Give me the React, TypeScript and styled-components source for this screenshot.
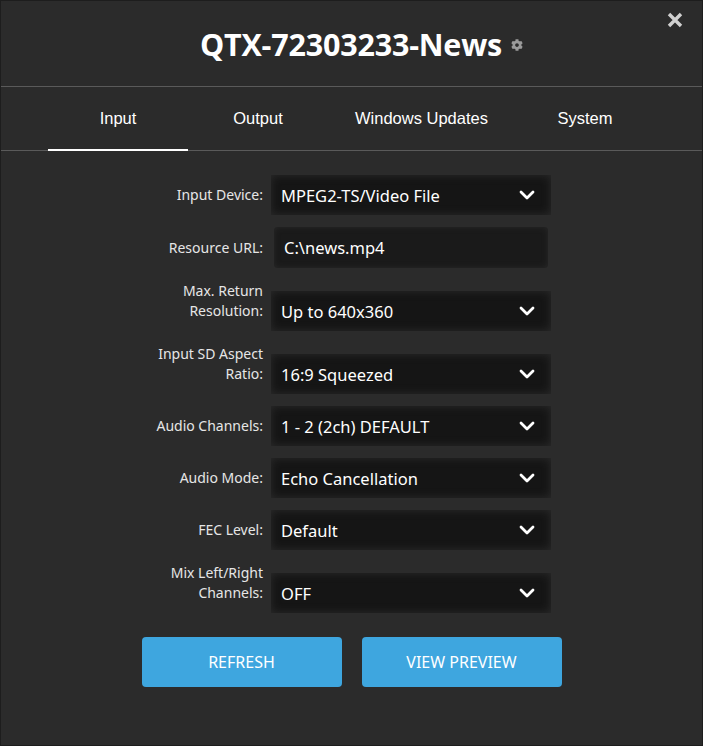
import React, { useState } from "react";
import styled, { createGlobalStyle } from "styled-components";
import { FaCog } from "react-icons/fa";

const GlobalStyle = createGlobalStyle`
  html, body {
    margin: 0;
    padding: 0;
    background: #1c1c1c;
  }
  * {
    box-sizing: border-box;
  }
`;

type Field = {
  label: string[];
  value: string;
  kind: "select" | "input";
};

const fields: Field[] = [
  { label: ["Input Device:"], value: "MPEG2-TS/Video File", kind: "select" },
  { label: ["Resource URL:"], value: "C:\\news.mp4", kind: "input" },
  { label: ["Max. Return", "Resolution:"], value: "Up to 640x360", kind: "select" },
  { label: ["Input SD Aspect", "Ratio:"], value: "16:9 Squeezed", kind: "select" },
  { label: ["Audio Channels:"], value: "1 - 2 (2ch) DEFAULT", kind: "select" },
  { label: ["Audio Mode:"], value: "Echo Cancellation", kind: "select" },
  { label: ["FEC Level:"], value: "Default", kind: "select" },
  { label: ["Mix Left/Right", "Channels:"], value: "OFF", kind: "select" },
];

const tabs = ["Input", "Output", "Windows Updates", "System"];

const Chevron = () => (
  <svg width="16" height="10" viewBox="0 0 16 10">
    <polyline
      points="2,2 8,8 14,2"
      fill="none"
      stroke="#fff"
      strokeWidth="2.8"
      strokeLinecap="round"
      strokeLinejoin="round"
    />
  </svg>
);

export default function App() {
  const [active, setActive] = useState(0);

  return (
    <>
      <GlobalStyle />
      <Modal>
        <Header>
          <Title>QTX-72303233-News</Title>
          <Gear>
            <FaCog size={12} />
          </Gear>
          <Close aria-label="close">
            <svg width="16" height="16" viewBox="0 0 16 16">
              <path
                d="M2 2 L14 14 M14 2 L2 14"
                stroke="#d0d0d0"
                strokeWidth="3.4"
                strokeLinecap="butt"
              />
            </svg>
          </Close>
        </Header>

        <Tabs>
          {tabs.map((t, i) => (
            <Tab key={t} $active={i === active} onClick={() => setActive(i)}>
              {t}
            </Tab>
          ))}
        </Tabs>

        <Form>
          {fields.map((f) => (
            <Row key={f.label.join(" ")} $tall={f.label.length > 1}>
              <Label>
                {f.label.map((l) => (
                  <span key={l}>{l}</span>
                ))}
              </Label>
              {f.kind === "select" ? (
                <Select>
                  <span>{f.value}</span>
                  <Chevron />
                </Select>
              ) : (
                <TextInput>{f.value}</TextInput>
              )}
            </Row>
          ))}
        </Form>

        <Buttons>
          <Button>REFRESH</Button>
          <Button>VIEW PREVIEW</Button>
        </Buttons>
      </Modal>
    </>
  );
}

const Modal = styled.div`
  width: 703px;
  height: 746px;
  background: #2b2b2b;
  border: 1px solid #1d1d1d;
  display: flex;
  flex-direction: column;
  font-family: "Noto Sans", "Open Sans", sans-serif;
  color: #fff;
`;

const Header = styled.div`
  position: relative;
  height: 86px;
  display: flex;
  align-items: center;
  justify-content: center;
  gap: 9px;
  border-bottom: 1px solid #5a5a5a;
  padding-left: 20px;
`;

const Title = styled.h1`
  margin: 0;
  font-family: "Open Sans", "Noto Sans", sans-serif;
  font-weight: 700;
  font-size: 30.5px;
  letter-spacing: -0.2px;
  color: #fff;
`;

const Gear = styled.span`
  display: flex;
  color: #9a9a9a;
  margin-top: 3px;
`;

const Close = styled.button`
  position: absolute;
  top: 11px;
  right: 19px;
  background: none;
  border: none;
  padding: 0;
  cursor: pointer;
  display: flex;
`;

const Tabs = styled.div`
  height: 64px;
  display: flex;
  justify-content: center;
  border-bottom: 1px solid #5a5a5a;
`;

const Tab = styled.div<{ $active: boolean }>`
  min-width: 140px;
  padding: 0 27px;
  display: flex;
  align-items: center;
  justify-content: center;
  font-family: "Liberation Sans", Arial, sans-serif;
  font-size: 16.5px;
  color: #fff;
  cursor: pointer;
  border-bottom: 2px solid ${(p) => (p.$active ? "#fff" : "transparent")};
  margin-bottom: -1px;
`;

const Form = styled.div`
  display: flex;
  flex-direction: column;
  gap: 12px;
  padding-top: 24px;
`;

const Row = styled.div<{ $tall: boolean }>`
  display: grid;
  grid-template-columns: 262px 280px;
  column-gap: 8px;
  align-items: end;
  min-height: ${(p) => (p.$tall ? "51px" : "40px")};
`;

const Label = styled.div`
  display: flex;
  flex-direction: column;
  align-items: flex-end;
  font-size: 14px;
  line-height: 20px;
  color: #e6e6e6;
  padding-bottom: 10px;
`;

const Select = styled.div`
  height: 40px;
  display: flex;
  align-items: center;
  justify-content: space-between;
  padding: 0 16px 0 10px;
  background: #151515;
  box-shadow: inset 0 0 10px rgba(70, 70, 70, 0.45);
  font-size: 16.5px;
  color: #fff;
`;

const TextInput = styled.div`
  height: 41px;
  margin: 0 3px;
  display: flex;
  align-items: center;
  padding: 0 10px;
  background: #1a1a1a;
  border-radius: 4px;
  box-shadow: inset 0 0 6px rgba(70, 70, 70, 0.35);
  font-size: 16.5px;
  color: #fff;
`;

const Buttons = styled.div`
  display: flex;
  justify-content: center;
  gap: 20px;
  margin-top: 24px;
`;

const Button = styled.button`
  width: 200px;
  height: 50px;
  border: none;
  border-radius: 4px;
  background: #3ea6df;
  color: #fff;
  font-family: "Noto Sans", "Open Sans", sans-serif;
  font-size: 16px;
  cursor: pointer;
`;
